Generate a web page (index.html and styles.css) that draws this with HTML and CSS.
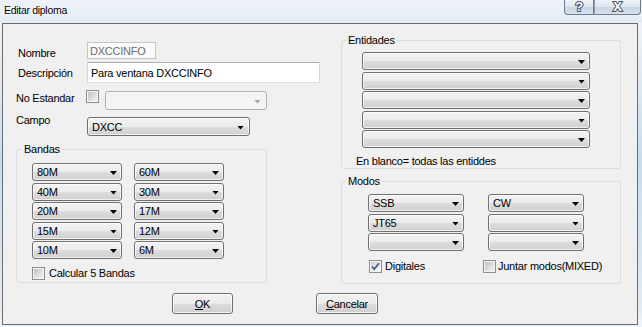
FILE: index.html
```html
<!DOCTYPE html>
<html lang="es">
<head>
    <meta charset="UTF-8">
    <title>Editar diploma</title>
    <link rel="stylesheet" href="styles.css">
</head>
<body>
    <div class="window">
        <div class="titlebar">
            <span class="title">Editar diploma</span>
            <div class="caption-btns">
                <span class="cap-btn cap-help">?</span>
                <span class="cap-btn cap-close">X</span>
            </div>
        </div>

        <div class="client">
            <div class="main">
                <!-- left column -->
                <div class="left">
                    <div class="row row-nombre">
                        <label class="lbl lbl-in">Nombre</label>
                        <div class="textbox textbox-ro">DXCCINFO</div>
                    </div>
                    <div class="row row-desc">
                        <label class="lbl lbl-in">Descripción</label>
                        <div class="textbox textbox-desc">Para ventana DXCCINFO</div>
                    </div>
                    <div class="row row-noest">
                        <label class="lbl">No Estandar</label>
                        <span class="checkbox"></span>
                        <div class="combo combo-disabled"></div>
                    </div>
                    <div class="row row-campo">
                        <label class="lbl">Campo</label>
                        <div class="combo combo-campo">DXCC</div>
                    </div>

                    <div class="group group-bandas">
                        <div class="group-title">Bandas</div>
                        <div class="band-grid">
                            <div class="combo">80M</div>
                            <div class="combo">60M</div>
                            <div class="combo">40M</div>
                            <div class="combo">30M</div>
                            <div class="combo">20M</div>
                            <div class="combo">17M</div>
                            <div class="combo">15M</div>
                            <div class="combo">12M</div>
                            <div class="combo">10M</div>
                            <div class="combo">6M</div>
                        </div>
                        <div class="check-row check-bandas">
                            <span class="checkbox"></span>
                            <span>Calcular 5 Bandas</span>
                        </div>
                    </div>
                </div>

                <!-- right column -->
                <div class="right">
                    <div class="group group-ent">
                        <div class="group-title">Entidades</div>
                        <div class="ent-list">
                            <div class="combo"></div>
                            <div class="combo"></div>
                            <div class="combo"></div>
                            <div class="combo"></div>
                            <div class="combo"></div>
                        </div>
                        <div class="ent-note">En blanco= todas las entiddes</div>
                    </div>

                    <div class="group group-modos">
                        <div class="group-title">Modos</div>
                        <div class="modos-grid">
                            <div class="combo">SSB</div>
                            <div class="combo">CW</div>
                            <div class="combo">JT65</div>
                            <div class="combo"></div>
                            <div class="combo"></div>
                            <div class="combo"></div>
                        </div>
                        <div class="modos-checks">
                            <div class="check-row check-dig">
                                <span class="checkbox checked">
                                    <svg width="11" height="11" viewBox="0 0 11 11"><path d="M2 5.5 L4.3 8.2 L9 2.3" fill="none" stroke="#4b5f8c" stroke-width="1.8"/></svg>
                                </span>
                                <span>Digitales</span>
                            </div>
                            <div class="check-row check-mixed">
                                <span class="checkbox"></span>
                                <span>Juntar modos(MIXED)</span>
                            </div>
                        </div>
                    </div>
                </div>
            </div>

            <div class="buttons">
                <button class="btn btn-ok"><u>O</u>K</button>
                <button class="btn btn-cancel"><u>C</u>ancelar</button>
            </div>
        </div>
    </div>
</body>
</html>
```

FILE: styles.css
```css
body {
    margin: 0;
    font-family: "Liberation Sans", Arial, sans-serif;
    font-size: 11px;
    letter-spacing: -0.25px;
    color: #000;
}
.window {
    width: 642px;
    height: 327px;
    overflow: hidden;
    background: linear-gradient(to bottom, #e8eff6 0, #eef3f8 24px, #c9dced 160px, #dfeaf4 300px, #eef4fa 100%);
}
.titlebar {
    height: 23px;
    display: flex;
    justify-content: space-between;
    align-items: flex-start;
    background: linear-gradient(to bottom, #eef3f8, #e4ecf4);
}
.title {
    margin: 4px 0 0 4px;
    font-size: 10.5px;
    line-height: 13px;
    letter-spacing: -0.3px;
    text-shadow: 0 0 4px #fff, 0 0 2px #fff;
}
.caption-btns {
    display: flex;
    margin-right: 1px;
}
.cap-btn {
    height: 15px;
    box-sizing: border-box;
    border: 1px solid #6f7d8c;
    border-top: none;
    background: linear-gradient(to bottom, #eef3f8, #dce5ee 50%, #c8d5e2 51%, #d6e1ec);
    color: #fff;
    font-weight: bold;
    font-size: 13px;
    line-height: 14px;
    text-align: center;
    -webkit-text-stroke: 2px #47525f;
    paint-order: stroke fill;
}
.cap-help {
    width: 30px;
    border-radius: 0 0 0 4px;
}
.cap-close {
    width: 47px;
    border-left-color: #8c98a6;
    border-radius: 0 0 4px 0;
}
.client {
    margin-left: 2px;
    width: 636px;
    height: 302px;
    box-sizing: border-box;
    border: 1px solid #6d6d6d;
    background: #f0f0f0;
}
.main {
    display: flex;
}
.left {
    width: 264px;
    flex-shrink: 0;
    box-sizing: border-box;
    padding: 18px 0 0 13px;
}
.right {
    width: 280px;
    margin-left: 74px;
    padding-top: 16px;
}
.row {
    display: flex;
    align-items: flex-start;
}
.lbl {
    width: 71px;
    flex-shrink: 0;
    box-sizing: border-box;
    line-height: 13px;
}
.lbl-in {
    padding-left: 2px;
}
.row-nombre {
    height: 17px;
}
.row-nombre .lbl {
    padding-top: 5px;
}
.row-desc {
    height: 21px;
    margin-top: 3px;
}
.row-desc .lbl {
    padding-top: 5px;
}
.row-noest {
    height: 20px;
    margin-top: 7px;
}
.row-noest .lbl {
    padding-top: 2px;
}
.row-noest .checkbox {
    margin-left: -1px;
}
.row-campo {
    height: 19px;
    margin-top: 7px;
}
.row-campo .lbl {
    margin-top: -3px;
}
.textbox {
    box-sizing: border-box;
    flex-shrink: 0;
    display: flex;
    align-items: center;
    white-space: nowrap;
}
.textbox-ro {
    width: 69px;
    height: 17px;
    padding-left: 2px;
    border: 1px solid #c5c5c5;
    background: #fbfbfb;
    color: #6d6d6d;
}
.textbox-desc {
    width: 233px;
    height: 21px;
    padding-left: 3px;
    border: 1px solid #abadb3;
    border-bottom-color: #dbdfe6;
    border-left-color: #d5d8de;
    border-right-color: #d5d8de;
    background: #fff;
}

/* win7 style dropdowns */
.combo {
    height: 18px;
    flex-shrink: 0;
    box-sizing: border-box;
    border: 1px solid #707070;
    border-radius: 3px;
    padding-left: 4px;
    display: flex;
    align-items: center;
    background: linear-gradient(to bottom, #f3f3f3 0, #ebebeb 50%, #dddddd 51%, #d0d0d0 100%);
    box-shadow: inset 0 0 0 1px rgba(255, 255, 255, 0.7);
}
.combo::after {
    content: "";
    width: 7px;
    height: 4px;
    margin: 2px 4px 0 auto;
    background: #000;
    clip-path: polygon(0 0, 100% 0, 50% 100%);
}
.combo-disabled {
    width: 162px;
    height: 19px;
    margin: 1px 0 0 6px;
    border-color: #adb2b5;
    background: #f4f4f4;
    box-shadow: none;
}
.combo-disabled::after {
    background: #a4a6a8;
    margin-right: 5px;
}
.combo-campo {
    width: 163px;
    height: 19px;
}
.combo-campo::after {
    margin-right: 5px;
}

.checkbox {
    width: 13px;
    height: 13px;
    flex-shrink: 0;
    box-sizing: border-box;
    border: 1px solid #8e8f8f;
    background: linear-gradient(135deg, #b8bbbf, #eeeeee 80%);
    box-shadow: inset 0 0 0 1px #f4f4f4;
    display: flex;
    align-items: center;
    justify-content: center;
}
.checkbox.checked {
    background: linear-gradient(135deg, #c9ccd1, #f3f3f3 80%);
}
.check-row {
    display: flex;
    align-items: center;
    gap: 4px;
    line-height: 13px;
    white-space: nowrap;
}

.group {
    box-sizing: border-box;
    border: 1px solid #d5dfe5;
    border-radius: 3px;
}
.group-title {
    width: fit-content;
    margin: -7px 0 0 5px;
    padding: 0 2px;
    line-height: 13px;
    background: #f0f0f0;
}
.group-bandas {
    width: 251px;
    height: 134px;
    margin-top: 13px;
}
.band-grid {
    display: grid;
    grid-template-columns: 90px 90px;
    column-gap: 12px;
    row-gap: 1.5px;
    margin: 7px 0 0 15px;
}
.check-bandas {
    margin: 8px 0 0 15px;
}
.group-ent {
    height: 129px;
}
.group-ent .group-title {
    margin-left: 4px;
}
.ent-list {
    display: flex;
    flex-direction: column;
    gap: 1.5px;
    width: 228px;
    margin: 5px 0 0 20px;
}
.ent-note {
    margin: 7px 0 0 14px;
    line-height: 13px;
}
.group-modos {
    height: 103px;
    margin-top: 12px;
}
.group-modos .group-title {
    margin-left: 4px;
}
.modos-grid {
    display: grid;
    grid-template-columns: 96px 96px;
    column-gap: 24px;
    row-gap: 1.5px;
    margin: 6px 0 0 26px;
}
.modos-checks {
    display: grid;
    grid-template-columns: 96px 96px;
    column-gap: 24px;
    margin: 9px 0 0 27px;
}
.check-dig {
    gap: 3px;
}
.check-mixed {
    margin-left: -6px;
    gap: 2px;
}

.buttons {
    display: flex;
    gap: 83px;
    margin: 9px 0 0 169px;
}
.btn {
    height: 21px;
    padding: 0;
    box-sizing: border-box;
    border: 1px solid #707070;
    border-radius: 3px;
    font-family: inherit;
    font-size: 11px;
    letter-spacing: -0.25px;
    color: #000;
    background: linear-gradient(to bottom, #f2f2f2 0, #ebebeb 50%, #dddddd 51%, #cfcfcf 100%);
    box-shadow: inset 0 0 0 1px rgba(255, 255, 255, 0.75);
}
.btn-ok {
    width: 61px;
}
.btn-cancel {
    width: 62px;
}
```
